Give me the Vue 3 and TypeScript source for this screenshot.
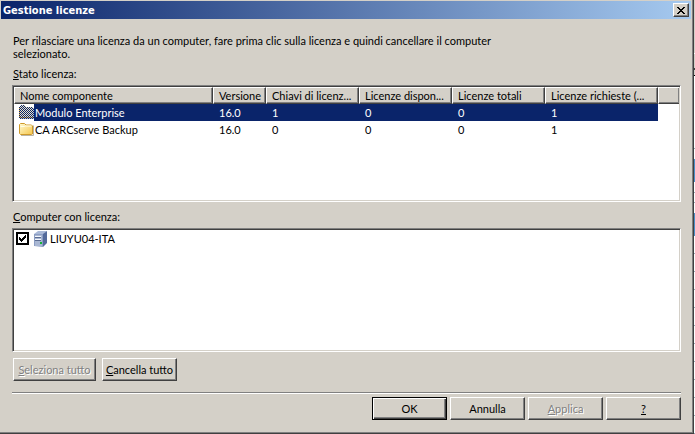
<script setup lang="ts">
import { ref } from 'vue'

interface Column { label: string; width: number }
interface License { name: string; values: string[] }

const columns: Column[] = [
  { label: 'Nome componente', width: 199 },
  { label: 'Versione', width: 53 },
  { label: 'Chiavi di licenz...', width: 93 },
  { label: 'Licenze dispon...', width: 93 },
  { label: 'Licenze totali', width: 93 },
  { label: 'Licenze richieste (...', width: 113 },
]

const licenses: License[] = [
  { name: 'Modulo Enterprise', values: ['16.0', '1', '0', '0', '1'] },
  { name: 'CA ARCserve Backup', values: ['16.0', '0', '0', '0', '1'] },
]

const selected = ref(0)
const computerChecked = ref(true)
</script>

<template>
  <div class="desktop">
    <main class="dialog">
      <header class="titlebar">
        <h1>Gestione licenze</h1>
        <button class="close" type="button" aria-label="Chiudi">
          <svg width="8" height="7" viewBox="0 0 8 7" shape-rendering="crispEdges">
            <path d="M0 0h2v1h1v1h2v-1h1v-1h2v1h-1v1h-1v1h-1v1h1v1h1v1h1v1h-2v-1h-1v-1h-2v1h-1v1h-2v-1h1v-1h1v-1h1v-1h-1v-1h-1v-1h-1z" />
          </svg>
        </button>
      </header>

      <section class="content">
        <p class="intro">Per rilasciare una licenza da un computer, fare prima clic sulla licenza e quindi cancellare il computer selezionato.</p>

        <h2 id="status-label" class="label"><u>S</u>tato licenza:</h2>
        <div class="well licenses">
          <table aria-labelledby="status-label">
            <colgroup>
              <col v-for="c in columns" :key="c.label" :style="{ width: c.width + 'px' }" />
              <col />
            </colgroup>
            <thead>
              <tr>
                <th v-for="c in columns" :key="c.label" scope="col">{{ c.label }}</th>
                <td class="filler"></td>
              </tr>
            </thead>
            <tbody>
              <tr v-for="(item, i) in licenses" :key="item.name" :class="{ selected: i === selected }" @click="selected = i">
                <td class="name">
                  <div class="name-cell">
                    <svg v-if="i === selected" width="16" height="16" viewBox="0 0 16 16" shape-rendering="crispEdges">
                      <defs>
                        <pattern id="dither" width="2" height="2" patternUnits="userSpaceOnUse">
                          <path d="M0 0h1v1h-1zM1 1h1v1h-1z" fill="#0a246a" />
                        </pattern>
                      </defs>
                      <path d="M1 3h1v-1h1v-1h4v1h1v1h7v1h1v11h-14v-1h-1z" fill="#e9e2c8" />
                      <path d="M1 13h14v1h-14zM1 3h1v10h-1z" fill="#d9a946" />
                      <path d="M15 4h1v11h-14v-1h13z" fill="#b4bed2" />
                      <path d="M1 3h1v-1h1v-1h4v1h1v1h7v1h1v11h-14v-1h-1z" fill="url(#dither)" />
                    </svg>
                    <svg v-else width="16" height="16" viewBox="0 0 16 16">
                      <defs>
                        <linearGradient id="folder-fill" x1="0" y1="0" x2="1" y2="1">
                          <stop offset="0" stop-color="#fffbd2" />
                          <stop offset="1" stop-color="#f5c64c" />
                        </linearGradient>
                      </defs>
                      <path d="M3 14.5h12.500v-10" fill="none" stroke="#b9b4a5" />
                      <path d="M1.500 12.500v-9l1-1h4l1.500 1.500h5.500l1 1v8l-1 .5h-11z" fill="url(#folder-fill)" stroke="#cf9a2b" />
                      <path d="M2.500 5.500h4l1-.5h6" fill="none" stroke="#fffdea" />
                    </svg>
                    <span class="name-text">{{ item.name }}</span>
                  </div>
                </td>
                <td v-for="(v, n) in item.values" :key="n">{{ v }}</td>
                <td class="filler"></td>
              </tr>
            </tbody>
          </table>
        </div>

        <h2 class="label second"><u>C</u>omputer con licenza:</h2>
        <div class="well computers">
          <label class="computer">
            <input v-model="computerChecked" type="checkbox" />
            <svg width="14" height="16" viewBox="0 0 14 16">
              <path d="M0 3l4-3h9l-3 3z" fill="#a9b9d8" />
              <path d="M9 3l4-3v12l-4 4z" fill="#536a9b" />
              <path d="M0 3h9v13l-9-1z" fill="#8b9dc3" />
              <path d="M1 4h7v11h-7z" fill="#a9b7d3" />
              <path d="M1 5h6v1h-6zM1 8h6v1h-6z" fill="#f4f7fc" />
              <path d="M1 6h6v1h-6zM1 9h6v1h-6z" fill="#5b6c91" />
              <path d="M6 11h2v2h-2z" fill="#16b538" />
            </svg>
            <span>LIUYU04-ITA</span>
          </label>
        </div>

        <div class="list-actions">
          <button class="btn select-all" type="button" disabled><u>S</u>eleziona tutto</button>
          <button class="btn" type="button" @click="computerChecked = false"><u>C</u>ancella tutto</button>
        </div>

        <footer class="actions">
          <button class="btn default" type="button">OK</button>
          <button class="btn" type="button">Annulla</button>
          <button class="btn" type="button" disabled><u>A</u>pplica</button>
          <button class="btn" type="button"><u>?</u></button>
        </footer>
      </section>
    </main>
    <div class="behind"></div>
  </div>
</template>

<style>
body {
  background: #d4d0c8;
}
</style>

<style scoped>
* {
  box-sizing: border-box;
}

.desktop {
  display: flex;
  min-height: 100vh;
  color: #000;
  font-family: Tahoma, Lato, "DejaVu Sans Condensed", sans-serif;
  font-size: 11px;
  line-height: 13px;
}

.dialog {
  flex: 1;
  min-width: 0;
  display: flex;
  flex-direction: column;
  padding: 1px 1px 0;
  background: #d4d0c8;
  border-right: 1px solid #404040;
  border-bottom: 1px solid #404040;
  box-shadow: inset -1px -1px #808080;
}

.behind {
  width: 1px;
  background:
    linear-gradient(#d4d0c8 53px, #fff 53px, #fff 54px, #d4d0c8 54px, #d4d0c8 68px, #404040 68px, #404040 70px, #d4d0c8 70px, #d4d0c8 75px, #000 75px, #000 76px, #fff 76px, #fff 148px, #9aa9b5 148px, #9aa9b5 149px, #fff 149px, #fff 159px, #4a90c8 159px, #4a90c8 182px, #fff 182px, #fff 192px, #9aa9b5 192px, #9aa9b5 193px, #fff 193px, #fff 202px, #9aa9b5 202px, #9aa9b5 203px, #fff 203px, #fff 213px, #4a90c8 213px, #4a90c8 236px, transparent 236px),
    repeating-linear-gradient(#9aa9b5 0, #9aa9b5 1px, #fff 1px, #fff 18px) 0 1px;
}

.titlebar {
  display: flex;
  align-items: center;
  justify-content: space-between;
  height: 18px;
  margin-right: 1px;
  padding: 0 2px;
  background: linear-gradient(90deg, #0a246a, #a6caf0);
}

h1 {
  margin: 0;
  color: #fff;
  font-family: Tahoma, "DejaVu Sans Condensed", sans-serif;
  font-size: 11px;
  font-weight: bold;
}

.close {
  display: flex;
  align-items: center;
  justify-content: center;
  width: 16px;
  height: 14px;
  padding: 0;
  background: #d4d0c8;
  border: 1px solid;
  border-color: #fff #404040 #404040 #fff;
  box-shadow: inset -1px -1px #808080;
}

.content {
  flex: 1;
  display: flex;
  flex-direction: column;
  padding: 15px 11px 13px;
}

.intro {
  max-width: 490px;
  margin: 0 0 7px;
}

.label {
  margin: 0 0 5px;
  font-size: 11px;
  font-weight: normal;
}

.intro,
.label {
  padding-left: 1px;
}

.second {
  margin-top: 8px;
}

.well {
  background: #fff;
  border: 1px solid;
  border-color: #808080 #fff #fff #808080;
  box-shadow: inset 1px 1px #404040, inset -1px -1px #d4d0c8;
  padding: 1px;
}

.licenses {
  height: 117px;
}

.computers {
  flex: 1;
}

table {
  width: 100%;
  table-layout: fixed;
  border-spacing: 0;
}

th,
td {
  height: 17px;
  padding: 0 6px;
  overflow: hidden;
  font-weight: normal;
  text-align: left;
  white-space: nowrap;
}

thead th,
thead td {
  background: #d4d0c8;
  border: 1px solid;
  border-color: #fff #404040 #404040 #fff;
  box-shadow: inset -1px -1px #808080;
  padding: 0 5px;
}

thead .filler {
  border-right: 0;
}

td.name {
  padding: 0;
}

.name-cell {
  display: flex;
  height: 17px;
  padding-left: 4px;
}

.name-text {
  flex: 1;
  padding-left: 1px;
  line-height: 17px;
}

.selected .name-text,
.selected td:not(.name):not(.filler) {
  color: #fff;
  background: #0a246a;
}

.computer {
  display: flex;
  width: max-content;
  align-items: center;
  height: 17px;
  padding-left: 2px;
}

.computer input {
  appearance: none;
  width: 13px;
  height: 13px;
  margin: 0 5px 0 0;
  border: 2px solid #000;
  background: #fff;
}

.computer input:checked {
  background: url("data:image/svg+xml,%3Csvg xmlns='http://www.w3.org/2000/svg' width='9' height='9' shape-rendering='crispEdges'%3E%3Cpath d='M1 3v3l2 2 5-5v-3l-5 5z'/%3E%3C/svg%3E") no-repeat;
}

.computer span {
  padding-left: 2px;
}

.list-actions {
  display: flex;
  gap: 6px;
  padding: 6px 0 11px 1px;
  border-bottom: 1px solid #808080;
  box-shadow: 0 1px #fff;
}

.actions {
  display: flex;
  justify-content: flex-end;
  gap: 3px;
  padding-top: 4px;
}

.btn {
  width: 75px;
  height: 23px;
  padding: 0;
  color: #000;
  font: inherit;
  background: #d4d0c8;
  border: 1px solid;
  border-color: #fff #404040 #404040 #fff;
  box-shadow: inset -1px -1px #808080;
}

.btn:disabled {
  color: #808080;
  text-shadow: 1px 1px #fff;
}

.select-all {
  width: 83px;
}

.default {
  border-color: #000;
  box-shadow: inset 1px 1px #fff, inset -1px -1px #404040, inset -2px -2px #808080;
}
</style>
